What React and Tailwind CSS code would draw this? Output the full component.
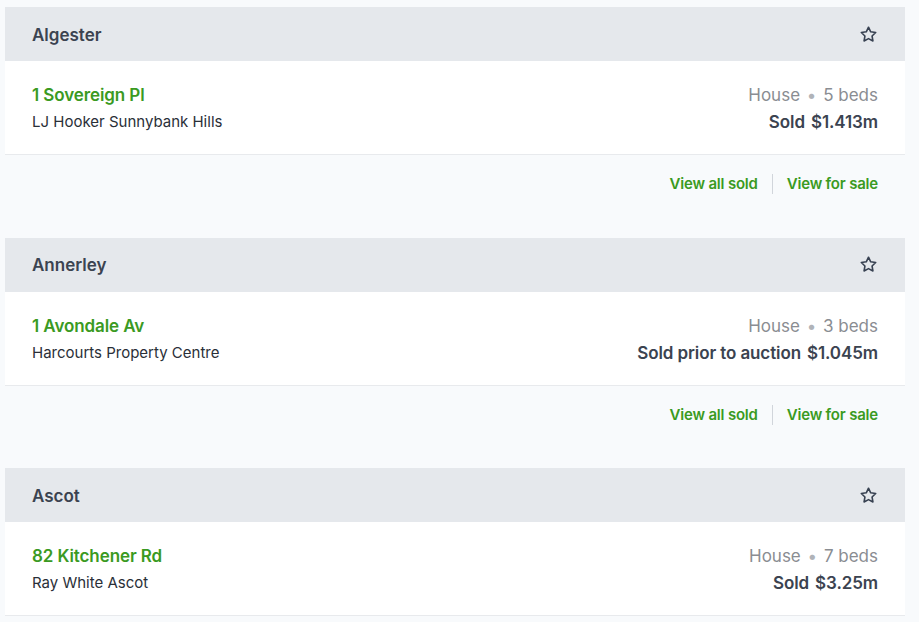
import React from "react";

const data = [
  { suburb: "Algester", addr: "1 Sovereign Pl", agent: "LJ Hooker Sunnybank Hills", beds: "5 beds", sold: "Sold", price: "$1.413m" },
  { suburb: "Annerley", addr: "1 Avondale Av", agent: "Harcourts Property Centre", beds: "3 beds", sold: "Sold prior to auction", price: "$1.045m" },
  { suburb: "Ascot", addr: "82 Kitchener Rd", agent: "Ray White Ascot", beds: "7 beds", sold: "Sold", price: "$3.25m" },
];

function Star() {
  return (
    <svg width="19" height="19" viewBox="0 0 24 24" fill="none" stroke="#374151" strokeWidth="2" strokeLinejoin="round">
      <path d="M12 2.8l2.8 5.8 6.3.9-4.6 4.4 1.1 6.3L12 17.2l-5.6 3 1.1-6.3-4.6-4.4 6.3-.9z" />
    </svg>
  );
}

function Card({ d, last }) {
  return (
    <div>
      <div className="flex h-[54px] items-center justify-between bg-[#e5e8ec] px-[27px]">
        <span className="mt-[3px] text-[17px] font-semibold text-[#3b4350]">{d.suburb}</span>
        <Star />
      </div>
      <div className="flex h-[94px] items-start justify-between border-b border-[#e8eaed] bg-white px-[27px] pt-[22px]">
        <div className="flex flex-col">
          <span className="text-[17px] font-semibold leading-[24px] tracking-[-0.1px] text-[#3a9a22]">{d.addr}</span>
          <span className="mt-[4px] text-[15px] leading-[22px] text-[#2a2f38]">{d.agent}</span>
        </div>
        <div className="flex flex-col items-end">
          <span className="text-[17px] leading-[24px] text-[#8a8d92]">
            House <span className="mx-[2px] text-[#b0b3b8]">•</span> {d.beds}
          </span>
          <span className="mt-[3px] text-[17px] font-semibold leading-[24px] tracking-[-0.1px] text-[#3b4350]">
            {d.sold}
            <span className="ml-[6px]">{d.price}</span>
          </span>
        </div>
      </div>
      {!last && (
        <div className="flex h-[82.5px] items-start justify-end px-[27px] pt-[18px]">
          <div className="flex items-center tracking-[-0.2px]">
            <span className="text-[15px] font-semibold text-[#3a9a22]">View all sold</span>
            <span className="mx-[14px] h-[20px] w-px bg-[#d1d5db]" />
            <span className="text-[15px] font-semibold text-[#3a9a22]">View for sale</span>
          </div>
        </div>
      )}
    </div>
  );
}

export default function App() {
  return (
    <div className="min-h-[622px] w-[919px] bg-[#f8fafc] pl-[5px] pr-[14px] pt-[7px]" style={{ fontFamily: "Inter, 'Noto Sans', sans-serif" }}>
      {data.map((d, i) => (
        <Card key={i} d={d} last={i === data.length - 1} />
      ))}
    </div>
  );
}
